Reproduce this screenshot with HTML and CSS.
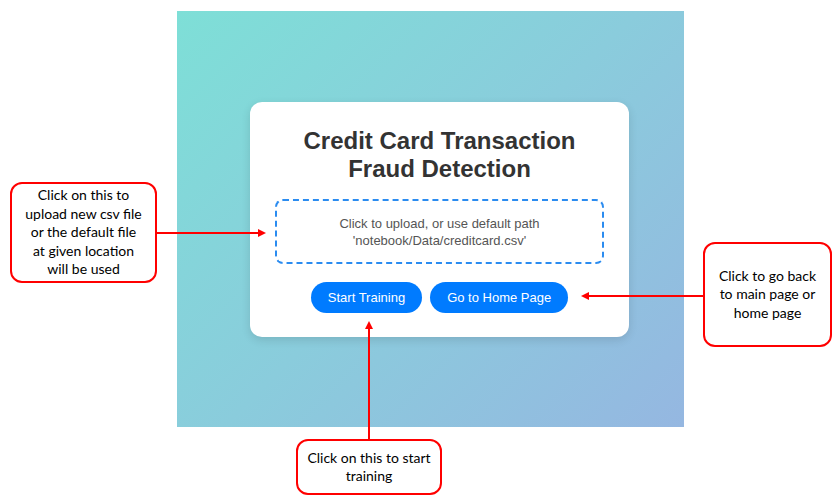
FILE: index.html
```html
<!DOCTYPE html>
<html>
<head>
<meta charset="utf-8">
<link rel="stylesheet" href="styles.css">
</head>
<body>
<div class="stage">
  <div class="panel">
    <div class="card">
      <h1 class="title">Credit Card Transaction<br>Fraud Detection</h1>
      <div class="dropzone">Click to upload, or use default path<br>'notebook/Data/creditcard.csv'</div>
      <div class="actions">
        <button class="btn">Start Training</button>
        <button class="btn">Go to Home Page</button>
      </div>
    </div>
  </div>

  <svg class="arrows" width="837" height="500" viewBox="0 0 837 500">
    <line x1="157" y1="233" x2="260" y2="233" stroke="#ff0000" stroke-width="2"/>
    <polygon points="266,233 258,229 258,237" fill="#ff0000"/>
    <line x1="703" y1="296" x2="588" y2="296" stroke="#ff0000" stroke-width="2"/>
    <polygon points="581,296 589,292 589,300" fill="#ff0000"/>
    <line x1="369" y1="439" x2="369" y2="328" stroke="#ff0000" stroke-width="2"/>
    <polygon points="369,321 365,329 373,329" fill="#ff0000"/>
  </svg>

  <div class="callout callout-left">Click on this to<br>upload new csv file<br>or the default file<br>at given location<br>will be used</div>
  <div class="callout callout-right">Click to go back<br>to main page or<br>home page</div>
  <div class="callout callout-bottom">Click on this to start<br>training</div>
</div>
</body>
</html>
```

FILE: styles.css
```css
html, body {
  margin: 0;
  padding: 0;
  background: #ffffff;
}

.stage {
  position: relative;
  width: 837px;
  height: 500px;
  overflow: hidden;
}

.panel {
  margin: 11px 0 0 177px;
  width: 507px;
  height: 416px;
  box-sizing: border-box;
  padding: 91px 55px 0 73px;
  background: linear-gradient(135deg, #7edfd7 0%, #8accdc 50%, #95b7e1 100%);
}

.card {
  width: 379px;
  height: 235px;
  box-sizing: border-box;
  padding: 25px 25px 24px;
  background: #ffffff;
  border-radius: 12px;
  box-shadow: 0 3px 10px rgba(0, 0, 0, 0.12);
  font-family: "Liberation Sans", Arial, sans-serif;
  display: flex;
  flex-direction: column;
  align-items: center;
}

.title {
  margin: 0;
  font-size: 24px;
  line-height: 28px;
  font-weight: bold;
  color: #333333;
  text-align: center;
}

.dropzone {
  margin-top: 16px;
  width: 100%;
  height: 65px;
  box-sizing: border-box;
  border: 2px dashed #2b8cf0;
  border-radius: 8px;
  display: flex;
  align-items: center;
  justify-content: center;
  text-align: center;
  font-size: 13px;
  line-height: 17px;
  color: #555555;
  padding-top: 1px;
}

.actions {
  margin-top: 18px;
  display: flex;
  gap: 8px;
}

.btn {
  height: 31px;
  margin: 0;
  padding: 0 17px;
  border: none;
  border-radius: 16px;
  background: #007bff;
  color: #ffffff;
  font-family: "Liberation Sans", Arial, sans-serif;
  font-size: 13px;
  line-height: 17px;
}

.arrows {
  position: absolute;
  left: 0;
  top: 0;
}

.callout {
  position: absolute;
  box-sizing: border-box;
  border: 2px solid #ff0000;
  border-radius: 12px;
  background: #ffffff;
  display: flex;
  align-items: center;
  justify-content: center;
  text-align: center;
  font-family: Lato, "Open Sans", sans-serif;
  font-size: 14px;
  line-height: 18.5px;
  color: #000000;
}

.callout-left {
  left: 10px;
  top: 182px;
  width: 147px;
  height: 101px;
}

.callout-right {
  left: 703px;
  top: 242px;
  width: 129px;
  height: 105px;
}

.callout-bottom {
  left: 296px;
  top: 439px;
  width: 146px;
  height: 56px;
}
```
